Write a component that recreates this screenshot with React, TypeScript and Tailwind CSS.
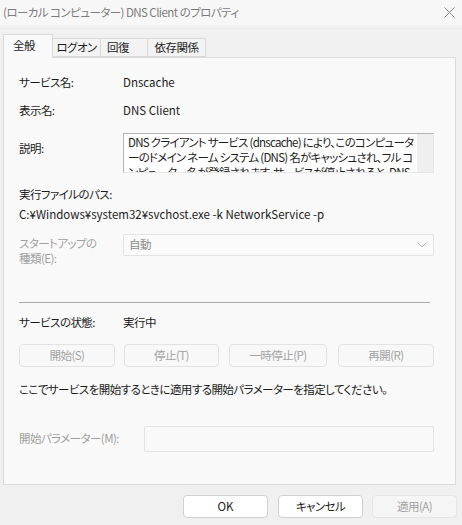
import React from 'react';

const Label: React.FC<{ children: React.ReactNode }> = ({ children }) => (
  <div className="w-[104px] shrink-0">{children}</div>
);

const GrayButton: React.FC<{ label: string; w: string }> = ({ label, w }) => (
  <div
    className={`${w} h-[23px] flex items-center justify-center rounded-[4px] border border-[#e3e3e3] bg-[#f8f8f8] text-[#a3a3a3]`}
  >
    {label}
  </div>
);

const App: React.FC = () => {
  return (
    <div
      className="w-[462px] h-[525px] bg-[#f0f0f0] flex flex-col text-[11.5px] tracking-[-0.55px] text-[#1b1b1b] overflow-hidden whitespace-nowrap [font-feature-settings:'palt']"
      style={{ fontFamily: '"Noto Sans CJK JP", "Noto Sans", sans-serif' }}
    >
      {/* title bar */}
      <div className="h-[25px] flex items-center justify-between pl-[3px] pr-[6px] bg-[#f7f7f7] text-[#7c7c7c]">
        <span>(ローカル コンピューター) DNS Client のプロパティ</span>
        <svg width="11" height="11" viewBox="0 0 11 11" className="mr-[1px]">
          <path d="M0.5 0.5 L10.5 10.5 M10.5 0.5 L0.5 10.5" stroke="#8a8a8a" strokeWidth="1" />
        </svg>
      </div>

      {/* tabs */}
      <div className="h-[32px] flex items-end pl-[3px]">
        <div className="relative z-10 -mb-px w-[50px] h-[24px] flex items-center pl-[9px] pb-[1px] bg-[#f9f9f9] border border-b-0 border-[#d9d9d9]">
          全般
        </div>
        <div className="w-[48px] h-[19px] flex items-center justify-center bg-[#f3f3f3] border border-l-0 border-[#d9d9d9]">
          ログオン
        </div>
        <div className="w-[47px] h-[19px] flex items-center pl-[6px] bg-[#f3f3f3] border border-l-0 border-[#d9d9d9]">
          回復
        </div>
        <div className="w-[58px] h-[19px] flex items-center justify-center bg-[#f3f3f3] border border-l-0 border-[#d9d9d9]">
          依存関係
        </div>
      </div>

      {/* panel */}
      <div className="ml-[3px] w-[453px] h-[428px] bg-[#f9f9f9] border border-[#dcdcdc] flex flex-col pl-[15px] pr-[21px] pt-[15px]">
        <div className="flex h-[20px] items-center">
          <Label>サービス名:</Label>
          <div className="tracking-normal">Dnscache</div>
        </div>
        <div className="flex h-[20px] items-center mt-[8px]">
          <Label>表示名:</Label>
          <div className="tracking-normal">DNS Client</div>
        </div>
        <div className="flex mt-[12px]">
          <Label>
            <div className="pt-[5px] leading-[20px]">説明:</div>
          </Label>
          <div className="w-[311px] h-[40px] flex bg-white border border-[#b5b5b5] border-r-[#e6e6e6] border-b-[#e6e6e6] overflow-hidden">
            <div className="flex-1 pl-[4px] pt-[1px] leading-[15px] tracking-[-0.75px] overflow-hidden">
              DNS クライアント サービス (dnscache) により、このコンピュータ
              <br />
              ーのドメイン ネーム システム (DNS) 名がキャッシュされ、フル コ
              <br />
              ンピューター名が登録されます。サービスが停止されると、DNS
            </div>
            <div className="w-[16px] shrink-0 bg-[#efefef]" />
          </div>
        </div>
        <div className="h-[20px] flex items-center mt-[12px]">実行ファイルのパス:</div>
        <div className="h-[20px] flex items-center tracking-normal">
          C:¥Windows¥system32¥svchost.exe -k NetworkService -p
        </div>
        <div className="flex mt-[9px] h-[68px]">
          <Label>
            <div className="pt-[2px] leading-[15px] text-[#a0a0a0]">
              スタートアップの
              <br />
              種類(E):
            </div>
          </Label>
          <div className="w-[311px] h-[22px] flex items-center justify-between pl-[5px] pr-[6px] bg-[#fbfbfb] border border-[#e3e3e3] rounded-[2px] text-[#8c8c8c]">
            <span>自動</span>
            <svg width="10" height="6" viewBox="0 0 10 6">
              <path d="M0.5 0.5 L5 5 L9.5 0.5" fill="none" stroke="#b8b8b8" strokeWidth="1" />
            </svg>
          </div>
        </div>
        <div className="w-[411px] h-px bg-[#a8a8a8]" />
        <div className="flex h-[20px] items-center mt-[10px]">
          <Label>サービスの状態:</Label>
          <div>実行中</div>
        </div>
        <div className="flex mt-[11px]">
          <GrayButton label="開始(S)" w="w-[96px]" />
          <div className="ml-[9px]">
            <GrayButton label="停止(T)" w="w-[95px]" />
          </div>
          <div className="ml-[10px]">
            <GrayButton label="一時停止(P)" w="w-[98px]" />
          </div>
          <div className="ml-[11px]">
            <GrayButton label="再開(R)" w="w-[96px]" />
          </div>
        </div>
        <div className="h-[20px] flex items-center mt-[13px]">
          ここでサービスを開始するときに適用する開始パラメーターを指定してください。
        </div>
        <div className="flex items-center mt-[26px]">
          <div className="w-[125px] shrink-0 text-[#a0a0a0]">開始パラメーター(M):</div>
          <div className="w-[290px] h-[26px] bg-[#f9f9f9] border border-[#e3e3e3] rounded-[2px]" />
        </div>
      </div>

      {/* bottom buttons */}
      <div className="flex justify-end pr-[5px] mt-[10px]">
        <div className="w-[85px] h-[23px] flex items-center justify-center bg-white border border-[#d0d0d0] rounded-[4px] tracking-normal">
          OK
        </div>
        <div className="ml-[10px] w-[85px] h-[23px] flex items-center justify-center bg-white border border-[#d0d0d0] rounded-[4px]">
          キャンセル
        </div>
        <div className="ml-[9px] w-[85px] h-[23px] flex items-center justify-center bg-[#f5f5f5] border border-[#e5e5e5] rounded-[4px] text-[#a3a3a3]">
          適用(A)
        </div>
      </div>
    </div>
  );
};

export default App;
